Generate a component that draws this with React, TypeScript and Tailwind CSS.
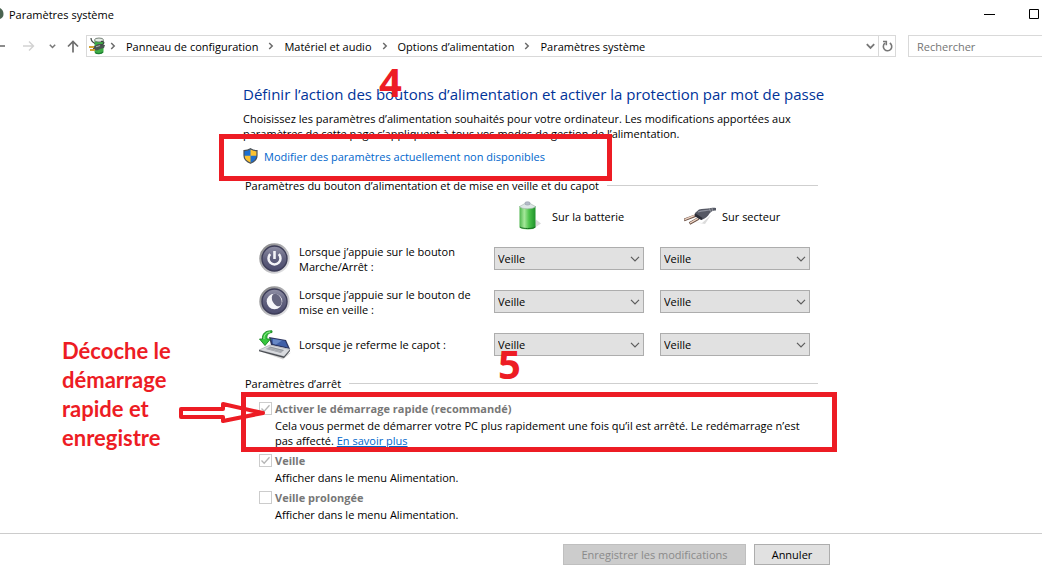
import React, { useId } from "react";

function ChevronRight() {
  return (
    <svg width="6" height="8" viewBox="0 0 6 8" fill="none" stroke="#6b6b6b" strokeWidth="1.5" aria-hidden="true">
      <path d="M1.2 1l3 3-3 3" />
    </svg>
  );
}

function PowerPlanIcon() {
  return (
    <svg width="17" height="18" viewBox="0 0 17 18" aria-hidden="true">
      <path d="M5.500 3.500C7 1 13 1 14.500 3.500V15c-1 2.500-8 2.500-9 0z" fill="#3fae46" />
      <ellipse cx="10" cy="3" rx="4.500" ry="2" fill="#e4ebe4" stroke="#5d6a60" strokeWidth=".8" />
      <path d="M2 1c0 3 1 4 4 5.500" fill="none" stroke="#3b4540" strokeWidth="1.200" />
      <path d="M4 10l4-2.500c3-1 5 0 8 .5l-1 3-4 1-3 1.500-4-1z" fill="#4b5451" />
      <path d="M0 10h5M1 13h5" stroke="#d1a232" strokeWidth="1.800" />
      <path d="M7 9.800l5-1.500" fill="none" stroke="#a9b2ae" strokeWidth="1" />
      <path d="M11 8.500C16 7 16 4 12 4.500" fill="none" stroke="#3b4540" strokeWidth="1.200" />
      <path d="M6 15.500c2 1.500 6 1.500 8-.5" fill="none" stroke="#1e7d33" strokeWidth="1.200" />
    </svg>
  );
}

function ShieldIcon() {
  return (
    <svg width="15" height="16" viewBox="0 0 15 16" aria-hidden="true">
      <path d="M7.500.8C5.500 2.200 3.200 2.700 1 2.700v4.800c0 3.600 2.700 6.200 6.500 7.700 3.800-1.500 6.500-4.100 6.500-7.700V2.700c-2.200 0-4.500-.5-6.500-1.900z" fill="#1d6fd0" />
      <path d="M7.500 1v6.800H14V2.700C11.800 2.700 9.500 2.300 7.500 1zM1 7.800c.2 3.400 2.800 5.900 6.500 7.400V7.800z" fill="#fdc22f" />
      <path d="M7.500.8C5.500 2.200 3.200 2.700 1 2.700v4.800c0 3.600 2.700 6.200 6.500 7.700 3.800-1.500 6.500-4.100 6.500-7.700V2.700c-2.200 0-4.500-.5-6.500-1.900z" fill="none" stroke="#4a5057" strokeWidth="1.200" />
    </svg>
  );
}

function BatteryIcon() {
  return (
    <svg width="24" height="30" viewBox="0 0 24 30" aria-hidden="true">
      <defs>
        <linearGradient id="cell" x1="0" x2="1" y1="0" y2="0">
          <stop offset="0" stopColor="#4db54c" />
          <stop offset=".3" stopColor="#a5e89a" />
          <stop offset=".6" stopColor="#4cc24b" />
          <stop offset="1" stopColor="#1f922b" />
        </linearGradient>
      </defs>
      <path d="M14 28.500l9-6-5-4z" fill="#c9c9c9" opacity=".7" />
      <path d="M1.500 5v21.500c2 2.600 14 2.600 16 0V5z" fill="url(#cell)" />
      <path d="M1.500 5.500L7 2.500h5l5.500 3c-2 3-14 3-16 0z" fill="#dde6e6" stroke="#a3b3ab" strokeWidth=".6" />
      <path d="M7 3.300V1.500c1-1 4-1 5 0v1.800c-1 1-4 1-5 0z" fill="#b5bcc8" stroke="#8a93a0" strokeWidth=".5" />
      <path d="M2 26c2 2 13.200 2 15.200 0" fill="none" stroke="#176d20" strokeWidth="1" />
    </svg>
  );
}

function PlugIcon() {
  return (
    <svg width="32" height="18" viewBox="0 0 32 18" aria-hidden="true">
      <path d="M10 15l8 1 9-8-6 9z" fill="#dcdcdc" />
      <path d="M0 13l12-4.500M5.500 16.500l9-5" stroke="#6b5145" strokeWidth="2.800" />
      <path d="M.5 12.600l11-4.400M6 16l8-4.600" stroke="#efd6c6" strokeWidth="1.400" />
      <path d="M11 6l4-3.500C18 1.500 23 2 27 1c2-.4 3-.4 5 0v2.500c-3-.3-4.500.6-6.500 3C23.500 10 21.500 11 18.500 12.500L16.500 12z" fill="#555864" />
      <path d="M11 6l7.500 5-.5 2-2-.5L10.500 9z" fill="#2c2e38" />
      <path d="M14 5c4-1.800 8-1 12-2" fill="none" stroke="#90939f" strokeWidth="1.200" />
      <path d="M25.500 1.200l1 3.300M28 1l.4 3" stroke="#a5a7ae" strokeWidth=".9" />
    </svg>
  );
}

function RoundButton({ name, children }: { name: string; children: React.ReactNode }) {
  return (
    <svg width="32" height="32" viewBox="0 0 32 32" aria-hidden="true">
      <defs>
        <linearGradient id={name + "-ring"} x1="0" x2="1" y1="0" y2="1">
          <stop offset="0" stopColor="#7b7b7b" />
          <stop offset=".5" stopColor="#b4b4b8" />
          <stop offset="1" stopColor="#f1f1f3" />
        </linearGradient>
        <linearGradient id={name + "-face"} x1="0" x2="0" y1="0" y2="1">
          <stop offset="0" stopColor="#9090a6" />
          <stop offset=".5" stopColor="#62627f" />
          <stop offset="1" stopColor="#4c4c6e" />
        </linearGradient>
      </defs>
      <circle cx="15.500" cy="15.500" r="15.200" fill={`url(#${name}-ring)`} />
      <circle cx="15.500" cy="15.500" r="12.500" fill={`url(#${name}-face)`} stroke="#3d3d58" strokeWidth="1.400" />
      {children}
    </svg>
  );
}

function PowerIcon() {
  return (
    <RoundButton name="power">
      <path d="M11.300 11.200a6 6 0 1 0 8.400 0" fill="none" stroke="#f4f4f8" strokeWidth="2.500" />
      <path d="M15.500 8v8" stroke="#f4f4f8" strokeWidth="2.600" />
    </RoundButton>
  );
}

function SleepIcon() {
  return (
    <RoundButton name="sleep">
      <circle cx="15.500" cy="15.500" r="7.800" fill="#f7f7fa" />
      <ellipse cx="17.800" cy="14" rx="4.400" ry="6.800" transform="rotate(-28 17.800 14)" fill="#66667f" />
    </RoundButton>
  );
}

function LidIcon() {
  return (
    <svg width="32" height="30" viewBox="0 0 32 30" aria-hidden="true">
      <path d="M3 22l21 7.500 8-7-3 1z" fill="#d5d5d5" />
      <path d="M10 7l17 3 4 9-19-4z" fill="#2d3660" />
      <path d="M12 8.500l14 2.300 3 6.700-15.400-3.500z" fill="#3f5fa8" />
      <path d="M14 9l9 1.500-6 4-3-.7z" fill="#6888c6" />
      <path d="M11 15l20 4.500-6 7L0 20z" fill="#d8dade" stroke="#8d9198" strokeWidth=".5" />
      <path d="M11 16.500l14 3.500-3 3L7 19z" fill="#8f939a" />
      <path d="M9 17.500l15 4M8 18.500l15 4" stroke="#d0d2d6" strokeWidth=".5" />
      <path d="M0 20l25 6.500 6-7v1.500l-6 7L0 21.300z" fill="#4a4d53" />
      <path d="M13 .8C6 .5 3 4 3.500 9H.5L6 15.500 11.500 9H8c-.5-4 1-6 5-6.500z" fill="#35c63c" stroke="#168420" strokeWidth=".9" />
      <path d="M11 2C7 2.300 4.800 5 5 9" fill="none" stroke="#a0f09b" strokeWidth="1" />
    </svg>
  );
}

function Choice({ label }: { label: string }) {
  return (
    <div className="grid h-[23px] w-[150px] items-center">
      <select
        aria-label={label}
        defaultValue="veille"
        className="col-start-1 row-start-1 h-full w-full appearance-none rounded-none border border-[#adadad] bg-[#e1e1e1] pl-[3px] text-black"
      >
        <option value="veille">Veille</option>
        <option value="none">Ne rien faire</option>
        <option value="off">Arrêter</option>
      </select>
      <svg
        className="pointer-events-none col-start-1 row-start-1 mr-1 justify-self-end"
        width="10"
        height="6"
        viewBox="0 0 10 6"
        fill="none"
        stroke="#5c5c5c"
        strokeWidth="1.200"
        aria-hidden="true"
      >
        <path d="M1 .8l4 4 4-4" />
      </svg>
    </div>
  );
}

function SectionTitle({ children }: { children: React.ReactNode }) {
  return (
    <div className="flex items-center gap-2 pl-0.5">
      <h2>{children}</h2>
      <hr className="grow border-[#cfcfcf]" />
    </div>
  );
}

function Option({ label, checked, children }: { label: string; checked?: boolean; children: React.ReactNode }) {
  const id = useId();
  return (
    <div className="grid grid-cols-[13px_1fr] gap-x-[3px]">
      <div className="grid items-center">
        <input
          id={id}
          type="checkbox"
          disabled
          defaultChecked={checked}
          className="col-start-1 row-start-1 size-[13px] appearance-none border border-[#cccccc] bg-white"
        />
        {checked && (
          <svg className="pointer-events-none col-start-1 row-start-1" width="13" height="13" viewBox="0 0 13 13" fill="none" stroke="#b5b5b5" strokeWidth="1.300" aria-hidden="true">
            <path d="M2.500 6.500l2.700 2.800 5.300-6" />
          </svg>
        )}
      </div>
      <label htmlFor={id} className="font-bold text-[#777777]">
        {label}
      </label>
      <p className="col-start-2 mt-0.5 pr-3">{children}</p>
    </div>
  );
}

const rows = [
  { icon: <PowerIcon />, label: "Lorsque j’appuie sur le bouton Marche/Arrêt :" },
  { icon: <SleepIcon />, label: "Lorsque j’appuie sur le bouton de mise en veille :" },
  { icon: <LidIcon />, label: "Lorsque je referme le capot :" },
];

const crumbs = ["Panneau de configuration", "Matériel et audio", "Options d’alimentation", "Paramètres système"];

export default function App() {
  return (
    <div className="flex min-h-screen flex-col overflow-hidden bg-white font-['Open_Sans','Noto_Sans',sans-serif] text-[11px] leading-[15px] text-black">
      <header>
        <div className="flex h-7 items-center">
          <svg width="4" height="14" viewBox="0 0 4 14" aria-hidden="true">
            <path d="M0 1c2 1 3.500 3 3.500 6S2 11 0 12z" fill="#4a6350" />
          </svg>
          <h1 className="ml-[5px] grow">Paramètres système</h1>
          <button aria-label="Réduire" className="mr-[34px]">
            <svg width="11" height="11" viewBox="0 0 11 11" stroke="#000" aria-hidden="true">
              <path d="M0 5.500h11" />
            </svg>
          </button>
          <button aria-label="Agrandir" className="mr-[3px]">
            <svg width="10" height="10" viewBox="0 0 10 10" fill="none" stroke="#000" aria-hidden="true">
              <path d="M.5.5h9v9h-9z" />
            </svg>
          </button>
        </div>
        <nav className="flex items-center pt-[7px]">
          <button aria-label="Précédent">
            <svg width="5" height="12" viewBox="0 0 5 12" stroke="#666" strokeWidth="1.500" aria-hidden="true">
              <path d="M0 6h5" />
            </svg>
          </button>
          <button aria-label="Suivant" className="ml-[17px]">
            <svg width="13" height="12" viewBox="0 0 13 12" fill="none" stroke="#d2d2d2" strokeWidth="1.400" aria-hidden="true">
              <path d="M1 6h10.500M7 1.500L11.500 6 7 10.500" />
            </svg>
          </button>
          <button aria-label="Emplacements récents" className="ml-3.5">
            <svg width="7" height="5" viewBox="0 0 7 5" fill="none" stroke="#777" strokeWidth="1.500" aria-hidden="true">
              <path d="M.8.8l2.700 2.700L6.200.8" />
            </svg>
          </button>
          <button aria-label="Monter" className="ml-[11px]">
            <svg width="12" height="13" viewBox="0 0 12 13" fill="none" stroke="#6e6e6e" strokeWidth="1.700" aria-hidden="true">
              <path d="M6 12.500V1.500M1 6.500l5-5 5 5" />
            </svg>
          </button>
          <div className="ml-[7px] flex h-[22px] grow items-center border border-[#d9d9d9]">
            <span className="mx-0.5">
              <PowerPlanIcon />
            </span>
            <ol className="flex grow items-center gap-2.5 pl-0.5">
              {crumbs.map((crumb) => (
                <li key={crumb} className="flex items-center gap-2.5">
                  <ChevronRight />
                  <a href="#">{crumb}</a>
                </li>
              ))}
            </ol>
            <button aria-label="Adresses précédentes" className="mr-[3px]">
              <svg width="9" height="7" viewBox="0 0 9 7" fill="none" stroke="#777" strokeWidth="1.800" aria-hidden="true">
                <path d="M.8 1.200l3.700 3.700 3.700-3.700" />
              </svg>
            </button>
            <button aria-label="Actualiser" className="flex h-full w-[17px] items-center justify-center border-l border-[#d9d9d9]">
              <svg width="11" height="12" viewBox="0 0 11 12" fill="none" stroke="#777" strokeWidth="1.600" aria-hidden="true">
                <path d="M7.800 3A4.200 4.200 0 1 1 3 3.200" />
                <path d="M1 1.500h3.300v3.800" />
              </svg>
            </button>
          </div>
          <input
            aria-label="Rechercher"
            placeholder="Rechercher"
            className="ml-3 h-[22px] w-[134px] border border-r-0 border-[#d9d9d9] px-2 placeholder:text-[#757575]"
          />
        </nav>
      </header>

      <main className="grow pl-[243px]">
        <div className="max-w-[575px] pt-[26px]">
          <section className="relative">
            <h2 className="text-[15px] leading-[22px] whitespace-nowrap text-[#003399]">
              Définir l’action des boutons d’alimentation et activer la protection par mot de passe
            </h2>
            <p className="mt-1.5">
              Choisissez les paramètres d’alimentation souhaités pour votre ordinateur. Les modifications apportées aux
              paramètres de cette page s’appliquent à tous vos modes de gestion de l’alimentation.
            </p>
            <a href="#" className="mt-[7px] flex items-center gap-1.5 text-[#0066cc]">
              <ShieldIcon />
              Modifier des paramètres actuellement non disponibles
            </a>
            <strong className="absolute -top-[22px] left-[136px] text-[40px] leading-[42px] font-bold text-[#ed1c24]">
              4
            </strong>
            <div className="pointer-events-none absolute top-[51px] -left-6 h-[47px] w-[393px] border-5 border-[#ed1c24]" />
          </section>

          <section className="relative mt-[14px]">
            <SectionTitle>Paramètres du bouton d’alimentation et de mise en veille et du capot</SectionTitle>
            <div className="mt-2 grid grid-cols-[219px_150px_150px] items-center gap-x-4 pl-4">
              <div className="col-start-2 flex items-center gap-2.5 pl-6">
                <BatteryIcon />
                Sur la batterie
              </div>
              <div className="flex items-center gap-1.5 pl-6">
                <PlugIcon />
                Sur secteur
              </div>
            </div>
            <div className="mt-1.5 grid grid-cols-[219px_150px_150px] gap-x-4 pl-4">
              {rows.map((row) => (
                <React.Fragment key={row.label}>
                  <div className="flex h-[43px] items-center gap-2">
                    <span className="shrink-0">{row.icon}</span>
                    <span>{row.label}</span>
                  </div>
                  <div className="flex items-center">
                    <Choice label={row.label + " sur la batterie"} />
                  </div>
                  <div className="flex items-center">
                    <Choice label={row.label + " sur secteur"} />
                  </div>
                </React.Fragment>
              ))}
            </div>
            <strong className="absolute top-[165px] left-[255px] text-[40px] leading-[42px] font-bold text-[#ed1c24]">
              5
            </strong>
          </section>

          <section className="relative mt-2.5">
            <SectionTitle>Paramètres d’arrêt</SectionTitle>
            <div className="mt-2.5 flex flex-col gap-[5px] pl-4">
              <Option label="Activer le démarrage rapide (recommandé)" checked>
                Cela vous permet de démarrer votre PC plus rapidement une fois qu’il est arrêté. Le redémarrage n’est
                pas affecté.{" "}
                <a href="#" className="text-[#0066cc] underline">
                  En savoir plus
                </a>
              </Option>
              <Option label="Veille" checked>
                Afficher dans le menu Alimentation.
              </Option>
              <Option label="Veille prolongée">Afficher dans le menu Alimentation.</Option>
            </div>
            <div className="pointer-events-none absolute top-4 -left-0.5 h-[60px] w-[596px] border-5 border-[#ed1c24]" />
            <svg
              className="pointer-events-none absolute top-[25px] -left-16"
              width="88"
              height="24"
              viewBox="0 0 88 24"
              fill="none"
              stroke="#ed1c24"
              strokeWidth="4"
              strokeLinejoin="round"
              aria-hidden="true"
            >
              <path d="M2 8h42V3l40 9-40 8v-4H2z" />
            </svg>
            <p className="absolute -top-10 -left-[181px] w-[116px] font-['Lato',sans-serif] text-[22px] leading-[29px] font-bold text-[#ed1c24]">
              Décoche le démarrage rapide et enregistre
            </p>
          </section>
        </div>
      </main>

      <footer className="border-t border-[#cccccc] pt-2.5 pb-[11px]">
        <div className="flex max-w-[830px] justify-end gap-2">
          <button disabled className="h-[21px] w-[183px] border border-[#bfbfbf] bg-[#cccccc] text-[#8a8a8a]">
            Enregistrer les modifications
          </button>
          <button className="h-[21px] w-[76px] border border-[#adadad] bg-[#e1e1e1]">Annuler</button>
        </div>
      </footer>
    </div>
  );
}
